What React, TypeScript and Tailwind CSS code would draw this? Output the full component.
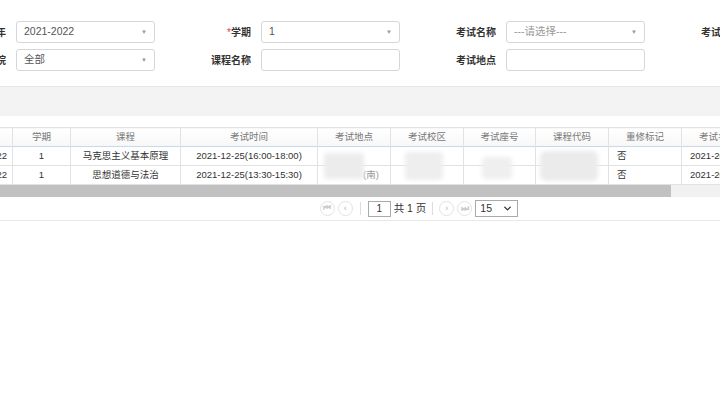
import { ChevronDown } from 'lucide-react'

const font = { fontFamily: '"Liberation Sans", "Noto Sans CJK SC", sans-serif' }

function Label({ text, required }: { text: string; required?: boolean }) {
  return (
    <div className="w-[96px] shrink-0 pr-[10px] text-right text-[10px] font-bold text-[#333]">
      {required && <span className="text-[#e33] font-normal">*</span>}
      {text}
    </div>
  )
}

function SelectBox({ value, placeholder }: { value: string; placeholder?: boolean }) {
  return (
    <div className="flex h-[22px] w-[139px] shrink-0 items-center justify-between rounded-[3px] border border-[#d6d6d6] bg-white pl-[7px] pr-[7px]">
      <span className={`text-[10.5px] ${placeholder ? 'text-[#999]' : 'text-[#555]'}`}>{value}</span>
      <span className="text-[6px] text-[#999]">▼</span>
    </div>
  )
}

function TextBox() {
  return <div className="h-[22px] w-[139px] shrink-0 rounded-[3px] border border-[#d6d6d6] bg-white" />
}

function Group({ children }: { children: React.ReactNode }) {
  return <div className="flex w-[245px] shrink-0 items-center">{children}</div>
}

const columns = [
  { title: '学年', w: 56 },
  { title: '学期', w: 58 },
  { title: '课程', w: 110 },
  { title: '考试时间', w: 137 },
  { title: '考试地点', w: 73 },
  { title: '考试校区', w: 73 },
  { title: '考试座号', w: 72 },
  { title: '课程代码', w: 73 },
  { title: '重修标记', w: 73 },
  { title: '考试名称', w: 73 },
]

const tableWidth = columns.reduce((s, c) => s + c.w, 0)

const rows = [
  ['2021-2022', '1', '马克思主义基本原理', '2021-12-25(16:00-18:00)', '', '', '', '', '否', '2021-2022-1'],
  ['2021-2022', '1', '思想道德与法治', '2021-12-25(13:30-15:30)', '(南)', '', '', '', '否', '2021-2022-1'],
]

function PagerBtn({ children }: { children: React.ReactNode }) {
  return (
    <div className="flex h-[15px] w-[15px] items-center justify-center rounded-full border border-[#e3e3e3] text-[9px] font-bold text-[#ccc]">
      {children}
    </div>
  )
}

export default function App() {
  return (
    <div className="h-[404px] w-[720px] overflow-hidden bg-white" style={font}>
      <div className="ml-[-80px] flex flex-col gap-[6px] pt-[21px]">
        <div className="flex">
          <Group>
            <Label text="学年" />
            <SelectBox value="2021-2022" />
          </Group>
          <Group>
            <Label text="学期" required />
            <SelectBox value="1" />
          </Group>
          <Group>
            <Label text="考试名称" />
            <SelectBox value="---请选择---" placeholder />
          </Group>
          <Group>
            <Label text="考试校区" />
            <SelectBox value="" />
          </Group>
        </div>
        <div className="flex">
          <Group>
            <Label text="学院" />
            <SelectBox value="全部" />
          </Group>
          <Group>
            <Label text="课程名称" />
            <TextBox />
          </Group>
          <Group>
            <Label text="考试地点" />
            <TextBox />
          </Group>
        </div>
      </div>

      <div className="mt-[15px] h-[30px] border-t border-[#e6e6e6] bg-[#f3f3f3]" />

      <div className="mt-[11px] border-b border-[#e8e8e8]">
        <div className="overflow-hidden">
          <table className="ml-[-44px] table-fixed border-collapse text-[9.5px]" style={{ width: tableWidth }}>
            <colgroup>
              {columns.map((c) => (
                <col key={c.title} style={{ width: c.w }} />
              ))}
            </colgroup>
            <thead>
              <tr className="h-[19px] border-t border-b border-[#e2e2e2] border-b-[#c5dbec] bg-gradient-to-b from-white to-[#f7f7f7] text-[#777]">
                {columns.map((c) => (
                  <th key={c.title} className="border-x border-[#e2e2e2] font-normal whitespace-nowrap text-center">
                    {c.title}
                  </th>
                ))}
              </tr>
            </thead>
            <tbody>
              {rows.map((r, i) => (
                <tr key={i} className="h-[19px] border-b border-[#e2e2e2] text-[#333]">
                  {r.map((v, j) => (
                    <td
                      key={j}
                      className={`relative overflow-visible border-x border-[#e2e2e2] whitespace-nowrap ${
                        j >= 8 ? 'pl-[8px] text-left' : j === 0 ? 'pr-[5px] text-right' : 'text-center'
                      }`}
                    >
                      {j === 4 && i === 1 ? <span className="pl-[34px] text-[#999]">{v}</span> : v}
                      {i === 0 && j === 4 && (
                        <div className="absolute top-[6px] left-[6px] z-10 h-[26px] w-[40px] rounded-[4px] bg-[#ececec] blur-[2px]" />
                      )}
                      {i === 0 && j === 5 && (
                        <div className="absolute top-[5px] left-[14px] z-10 h-[28px] w-[38px] rounded-[4px] bg-[#eeeeee] blur-[2px]" />
                      )}
                      {i === 0 && j === 6 && (
                        <div className="absolute top-[10px] left-[18px] z-10 h-[22px] w-[30px] rounded-[4px] bg-[#efefef] blur-[2px]" />
                      )}
                      {i === 0 && j === 7 && (
                        <div className="absolute top-[4px] left-[4px] z-10 h-[30px] w-[58px] rounded-[6px] bg-[#ebebeb] blur-[2px]" />
                      )}
                    </td>
                  ))}
                </tr>
              ))}
            </tbody>
          </table>
        </div>
        <div className="flex h-[12px] bg-[#f1f1f1]">
          <div className="w-[671px] bg-[#c1c1c1]" />
        </div>
        <div className="flex h-[23px] items-center justify-center gap-[3px] pl-[118px] text-[10px] text-[#333]">
          <PagerBtn>⏮</PagerBtn>
          <PagerBtn>‹</PagerBtn>
          <div className="mx-[4px] h-[13px] w-px bg-[#ddd]" />
          <div className="flex h-[16px] w-[23px] items-center justify-center border border-[#aaa] text-[10px]">1</div>
          <span className="text-[10.5px]">共 1 页</span>
          <div className="mx-[3px] h-[13px] w-px bg-[#ddd]" />
          <PagerBtn>›</PagerBtn>
          <PagerBtn>⏭</PagerBtn>
          <div className="flex h-[17px] w-[43px] items-center justify-between border border-[#aaa] pl-[4px] pr-[4px] text-[10.5px]">
            15
            <ChevronDown size={11} strokeWidth={3} className="text-[#333]" />
          </div>
        </div>
      </div>
    </div>
  )
}
